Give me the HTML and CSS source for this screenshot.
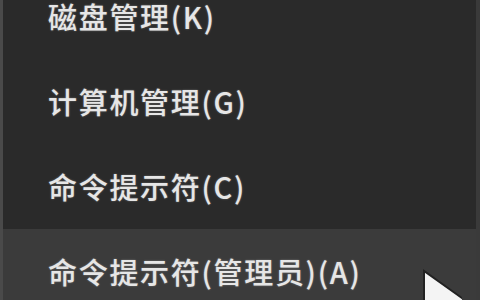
FILE: index.html
```html
<!DOCTYPE html>
<html lang="zh-CN">
<head>
    <meta charset="UTF-8">
    <title>菜单</title>
    <link rel="stylesheet" href="styles.css">
</head>
<body>
<div class="cai-dan">
    <div class="muc muc-dau">磁盘管理(K)</div>
    <div class="muc">计算机管理(G)</div>
    <div class="muc">命令提示符(C)</div>
    <div class="muc dang-chon">命令提示符(管理员)(A)</div>
</div>
<svg class="con-tro" width="40" height="50" viewBox="0 0 40 50">
    <path d="M2 2 L2 46 L12 36 L20 50 L40 50 L30 32 L44 32 Z" fill="#f4f4f4" stroke="#222" stroke-width="2"/>
</svg>
</body>
</html>
```
FILE: styles.css
```css
body {
    margin: 0;
    width: 480px;
    height: 300px;
    overflow: hidden;
    background-color: #2a2a2a;
    font-family: "Noto Sans CJK SC", "Noto Sans", sans-serif;
    position: relative;
}

.cai-dan {
    border-left: 3px solid #4a4a4a;
    border-right: 4px solid #3a3a3a;
    height: 300px;
    overflow: hidden;
}

.muc {
    height: 85px;
    display: flex;
    align-items: center;
    padding-left: 45px;
    font-size: 29px;
    line-height: 1.1;
    font-weight: 500;
    letter-spacing: 1.7px;
    color: #e6e6e6;
    text-shadow: 0 0 2px rgba(255, 255, 255, 0.35);
    box-sizing: border-box;
}

.muc-dau {
    height: 59px;
    padding-bottom: 26px;
}

.dang-chon {
    background-color: #3b3b3b;
}

.con-tro {
    position: absolute;
    left: 422px;
    top: 269px;
}
```
